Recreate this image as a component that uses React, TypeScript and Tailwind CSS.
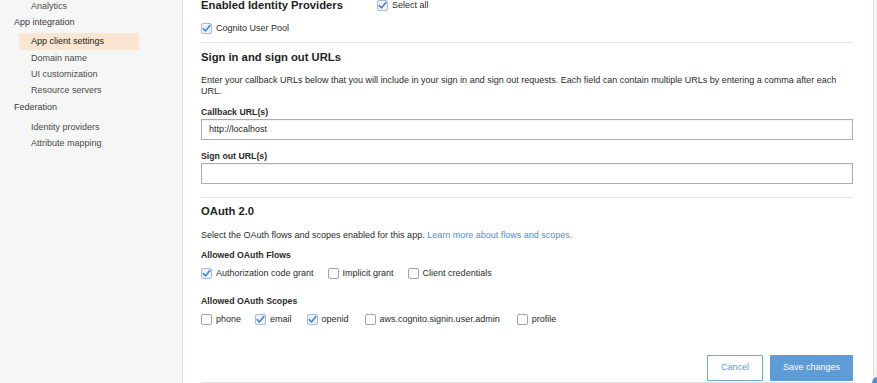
import React from "react";

const font = { fontFamily: '"Liberation Sans", Arial, Helvetica, sans-serif' };

function Check({ checked }: { checked: boolean }) {
  if (checked) {
    return (
      <span className="relative inline-flex h-[11px] w-[11px] shrink-0 items-center justify-center rounded-[2px] border border-[#a8bcd2] bg-[#eef3f9]">
        <svg width="9" height="9" viewBox="0 0 9 9" className="block">
          <path d="M1.2 4.6 L3.4 6.9 L7.9 1.6" fill="none" stroke="#3b82d0" strokeWidth="1.5" strokeLinecap="round" strokeLinejoin="round" />
        </svg>
      </span>
    );
  }
  return <span className="inline-block h-[11px] w-[11px] shrink-0 rounded-[2px] border border-[#a3a3a3] bg-white" />;
}

function CheckItem({ checked, label, gap = 15 }: { checked: boolean; label: string; gap?: number }) {
  return (
    <span className="inline-flex items-center gap-[4px]" style={{ marginRight: gap }}>
      <Check checked={checked} />
      <span className="text-[9px] leading-[11px] text-[#2b2b2b]">{label}</span>
    </span>
  );
}

export default function App() {
  return (
    <div className="relative flex h-[383px] w-[877px] overflow-hidden bg-white" style={font}>
      {/* Sidebar */}
      <div className="w-[183px] shrink-0 border-r border-[#e3e6e6] bg-[#f5f7f7] text-[9px]">
        <div className="mt-[-1px] flex h-[16px] items-center pl-[31px] text-[#4a4a4a]">Analytics</div>
        <div className="flex h-[16px] items-center pl-[14px] text-[#3a3a3a]">App integration</div>
        <div className="ml-[19px] mt-[2px] flex h-[17px] w-[120px] items-center bg-[#f9e5d0] pl-[12px] text-[#1a1a1a]">
          App client settings
        </div>
        <div className="mt-[1px] flex h-[16px] items-center pl-[31px] text-[#4a4a4a]">Domain name</div>
        <div className="flex h-[16px] items-center pl-[31px] text-[#4a4a4a]">UI customization</div>
        <div className="flex h-[16px] items-center pl-[31px] text-[#4a4a4a]">Resource servers</div>
        <div className="mt-[1px] flex h-[16px] items-center pl-[14px] text-[#3a3a3a]">Federation</div>
        <div className="mt-[4px] flex h-[16px] items-center pl-[31px] text-[#4a4a4a]">Identity providers</div>
        <div className="flex h-[16px] items-center pl-[31px] text-[#4a4a4a]">Attribute mapping</div>
      </div>

      {/* Main */}
      <div className="flex-1 pl-[18px] pr-[20px]">
        <div className="mt-[-2px] flex h-[14px] items-center">
          <div className="w-[176px] text-[11.25px] font-bold leading-[14px] text-[#1f1f1f]">Enabled Identity Providers</div>
          <CheckItem checked label="Select all" />
        </div>
        <div className="mt-[10px] flex h-[12px] items-center">
          <CheckItem checked label="Cognito User Pool" />
        </div>
        <div className="mt-[8px] h-px bg-[#e4e4e4]" />

        <div className="mt-[7px] text-[11.25px] font-bold leading-[14px] text-[#1f1f1f]">Sign in and sign out URLs</div>
        <p className="mt-[11px] text-[9px] leading-[11px] text-[#2b2b2b]">
          Enter your callback URLs below that you will include in your sign in and sign out requests. Each field can contain multiple URLs by entering a comma after each URL.
        </p>

        <div className="mt-[10px] text-[8.75px] font-bold leading-[11px] text-[#2b2b2b]">Callback URL(s)</div>
        <div className="mt-[1px] flex h-[21px] items-center border border-[#aeaeae] bg-white pl-[7px] text-[9px] text-[#1f1f1f] shadow-[inset_0_1px_1px_rgba(0,0,0,0.06)]">
          http://localhost
        </div>

        <div className="mt-[11px] text-[8.75px] font-bold leading-[11px] text-[#2b2b2b]">Sign out URL(s)</div>
        <div className="mt-[1px] h-[21px] border border-[#aeaeae] bg-white shadow-[inset_0_1px_1px_rgba(0,0,0,0.06)]" />

        <div className="mt-[13px] h-px bg-[#e4e4e4]" />

        <div className="mt-[6px] text-[11.25px] font-bold leading-[14px] text-[#1f1f1f]">OAuth 2.0</div>
        <p className="mt-[12px] text-[9px] leading-[11px] text-[#2b2b2b]">
          Select the OAuth flows and scopes enabled for this app.{" "}
          <span className="text-[#4a8fd6]">Learn more about flows and scopes.</span>
        </p>

        <div className="mt-[9px] text-[8.75px] font-bold leading-[11px] text-[#2b2b2b]">Allowed OAuth Flows</div>
        <div className="mt-[6px] flex h-[12px] items-center">
          <CheckItem checked label="Authorization code grant" gap={14} />
          <CheckItem checked={false} label="Implicit grant" gap={14} />
          <CheckItem checked={false} label="Client credentials" />
        </div>

        <div className="mt-[17px] text-[8.75px] font-bold leading-[11px] text-[#2b2b2b]">Allowed OAuth Scopes</div>
        <div className="mt-[6px] flex h-[12px] items-center">
          <CheckItem checked={false} label="phone" gap={14} />
          <CheckItem checked label="email" gap={15} />
          <CheckItem checked label="openid" gap={16} />
          <CheckItem checked={false} label="aws.cognito.signin.user.admin" gap={17} />
          <CheckItem checked={false} label="profile" />
        </div>

        <div className="mt-[30px] flex justify-end gap-[7px]">
          <button className="h-[26px] w-[56px] rounded-[1px] border border-[#6ea6db] bg-white text-[9px] text-[#5b9bd6]" style={font}>
            Cancel
          </button>
          <button className="h-[26px] w-[83px] rounded-[1px] bg-[#5d9cd7] text-[9px] text-white" style={font}>
            Save changes
          </button>
        </div>
        <div className="mt-[1px] h-px bg-[#e4e4e4]" />
      </div>

      {/* right strip */}
      <div className="w-[4px] shrink-0 border-l border-[#dedede] bg-[#f3f4f4]" />
      <div className="absolute left-[872px] top-[377px] h-[12px] w-[12px] rounded-full bg-[#4a8fd6]" />
    </div>
  );
}
